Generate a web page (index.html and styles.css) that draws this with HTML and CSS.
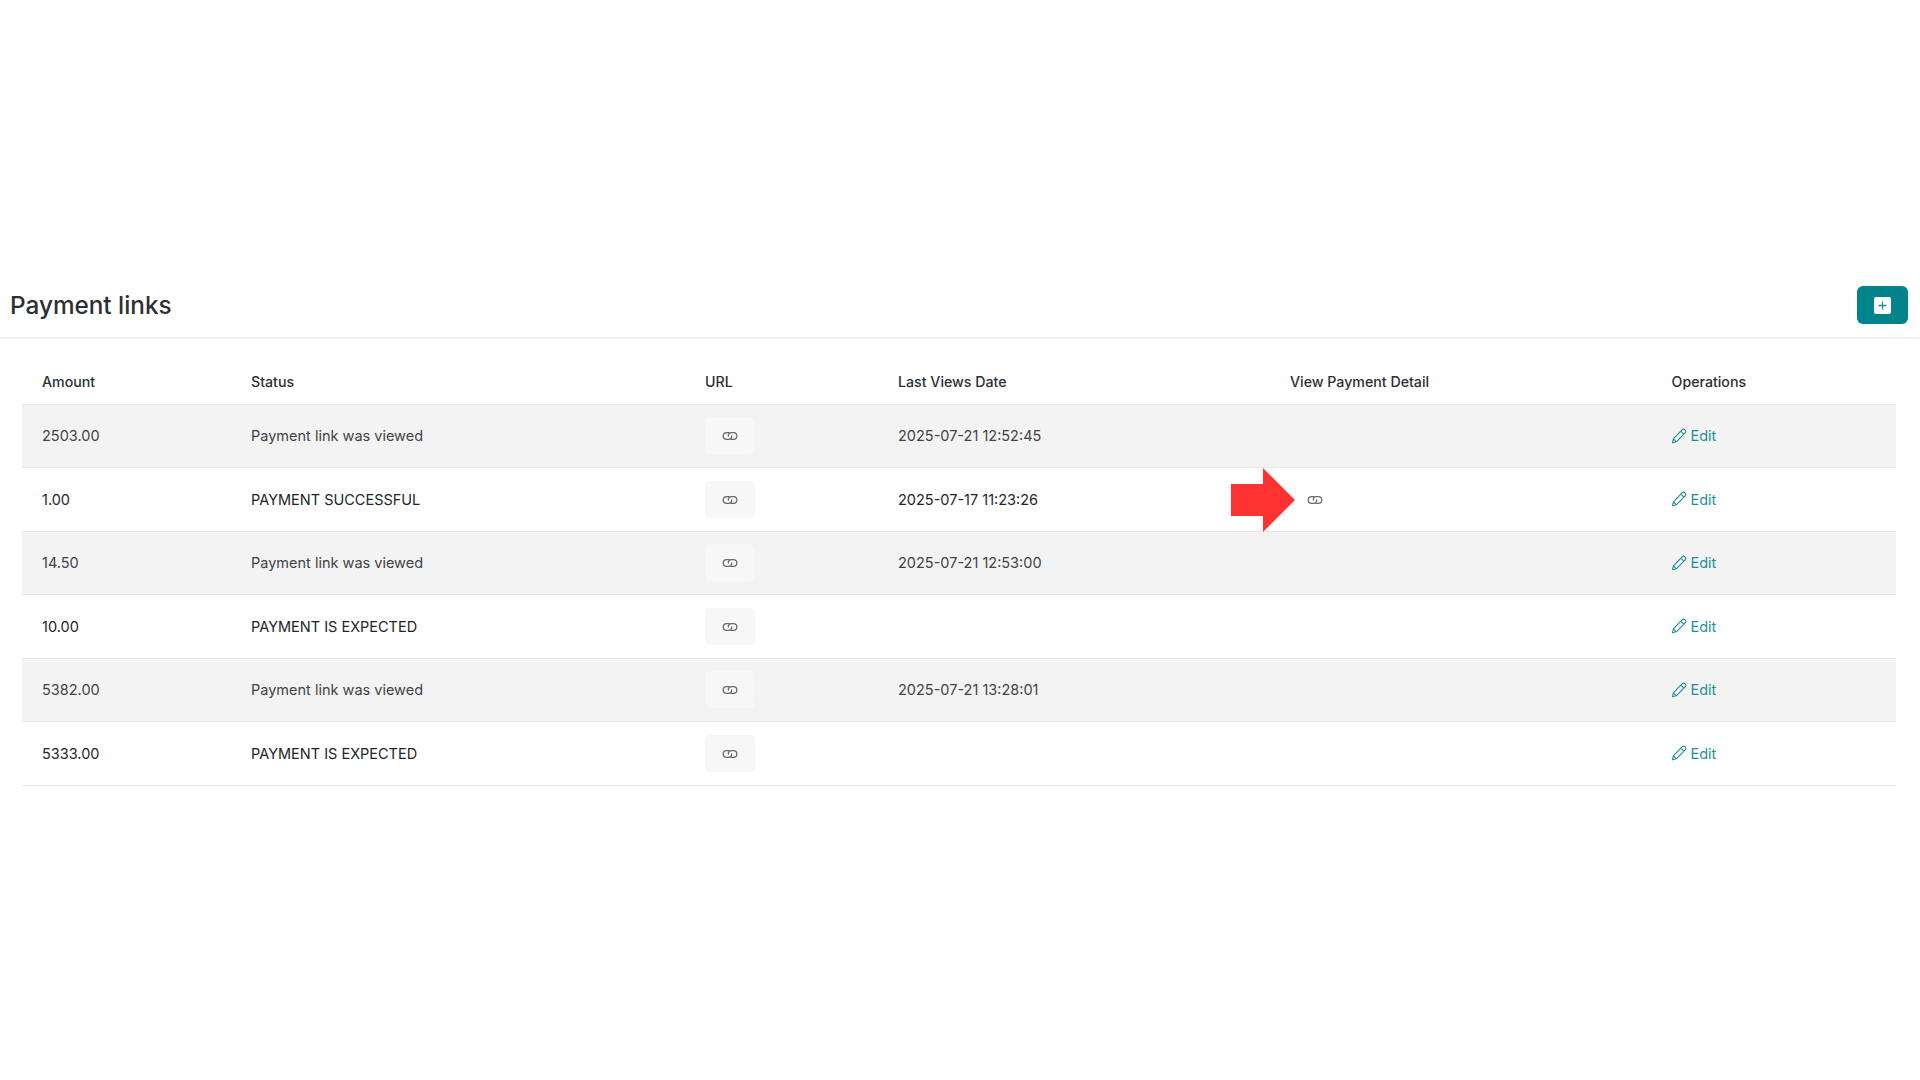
FILE: index.html
```html
<!DOCTYPE html>
<html lang="en">
<head>
<meta charset="utf-8">
<title>Payment links</title>
<link rel="stylesheet" href="styles.css">
</head>
<body>
<svg class="defs" width="0" height="0" aria-hidden="true">
  <symbol id="link" viewBox="0 0 16 16">
    <path d="M7 4.6H4.6a3.4 3.4 0 0 0 0 6.8H6.4a3.4 3.4 0 0 0 3.3-3.4" fill="none" stroke="currentColor" stroke-width="1.3" stroke-linecap="round"/>
    <path d="M9 11.4h2.4a3.4 3.4 0 0 0 0-6.8H9.6a3.4 3.4 0 0 0-3.3 3.4" fill="none" stroke="currentColor" stroke-width="1.3" stroke-linecap="round"/>
  </symbol>
  <symbol id="pencil" viewBox="0 0 16 16">
    <path d="M11.3 1.6a1.6 1.6 0 0 1 2.3 0l.8.8a1.6 1.6 0 0 1 0 2.3L5.3 13.8l-3.9 1 1-3.9zM9.8 3.1l3.1 3.1M2.4 10.9l2.9 2.9" fill="none" stroke="currentColor" stroke-width="1.1" stroke-linejoin="round"/>
  </symbol>
</svg>
<main class="page">
  <header class="head">
    <h1 class="title">Payment links</h1>
    <button class="add" type="button" aria-label="Add">
      <span class="add-box">
        <svg width="9" height="9" viewBox="0 0 9 9"><path d="M4.5 0.5v8M0.5 4.5h8" stroke="#1f8f94" stroke-width="1.3"/></svg>
      </span>
    </button>
  </header>
  <div class="wrap">
    <table class="links">
      <colgroup>
        <col class="c1"><col class="c2"><col class="c3"><col class="c4"><col class="c5"><col class="c6">
      </colgroup>
      <thead>
        <tr><th>Amount</th><th>Status</th><th>URL</th><th>Last Views Date</th><th>View Payment Detail</th><th>Operations</th></tr>
      </thead>
      <tbody>
        <tr>
          <td>2503.00</td><td>Payment link was viewed</td>
          <td><a class="url"><svg class="ic"><use href="#link"/></svg></a></td>
          <td>2025-07-21 12:52:45</td><td></td>
          <td><a class="edit"><svg class="pen"><use href="#pencil"/></svg>Edit</a></td>
        </tr>
        <tr>
          <td>1.00</td><td>PAYMENT SUCCESSFUL</td>
          <td><a class="url"><svg class="ic"><use href="#link"/></svg></a></td>
          <td>2025-07-17 11:23:26</td>
          <td class="detail">
            <svg class="arrow" width="64" height="64" viewBox="0 0 64 64"><path d="M0 16H32V0L64 32 32 64V48H0z" fill="#ff3232"/></svg>
            <a class="url plain"><svg class="ic"><use href="#link"/></svg></a>
          </td>
          <td><a class="edit"><svg class="pen"><use href="#pencil"/></svg>Edit</a></td>
        </tr>
        <tr>
          <td>14.50</td><td>Payment link was viewed</td>
          <td><a class="url"><svg class="ic"><use href="#link"/></svg></a></td>
          <td>2025-07-21 12:53:00</td><td></td>
          <td><a class="edit"><svg class="pen"><use href="#pencil"/></svg>Edit</a></td>
        </tr>
        <tr>
          <td>10.00</td><td>PAYMENT IS EXPECTED</td>
          <td><a class="url"><svg class="ic"><use href="#link"/></svg></a></td>
          <td></td><td></td>
          <td><a class="edit"><svg class="pen"><use href="#pencil"/></svg>Edit</a></td>
        </tr>
        <tr>
          <td>5382.00</td><td>Payment link was viewed</td>
          <td><a class="url"><svg class="ic"><use href="#link"/></svg></a></td>
          <td>2025-07-21 13:28:01</td><td></td>
          <td><a class="edit"><svg class="pen"><use href="#pencil"/></svg>Edit</a></td>
        </tr>
        <tr>
          <td>5333.00</td><td>PAYMENT IS EXPECTED</td>
          <td><a class="url"><svg class="ic"><use href="#link"/></svg></a></td>
          <td></td><td></td>
          <td><a class="edit"><svg class="pen"><use href="#pencil"/></svg>Edit</a></td>
        </tr>
      </tbody>
    </table>
  </div>
</main>
</body>
</html>
```
FILE: styles.css
```css
* { box-sizing: border-box; }
html, body { margin: 0; height: 100%; background: #fff; }
body { font-family: Inter, "Liberation Sans", sans-serif; color: #212529; overflow: hidden; }
.defs { display: block; height: 0; }
.page { padding-top: 287px; }

.head {
  display: flex;
  align-items: center;
  justify-content: space-between;
  height: 52px;
  padding: 0 12px 14px 10px;
  border-bottom: 2px solid #f3f3f3;
}
.title { margin: 0; font-size: 24.3px; line-height: 38px; font-weight: 500; color: #2b3035; }
.add {
  display: flex;
  align-items: center;
  justify-content: center;
  width: 51px;
  height: 38px;
  padding: 0;
  border: 0;
  border-radius: 6px;
  background: #00838a;
}
.add-box {
  display: flex;
  align-items: center;
  justify-content: center;
  width: 17px;
  height: 17px;
  border-radius: 2px;
  background: #fff;
}

.wrap { padding: 24px 24px 0 22px; }
.links { width: 100%; border-collapse: collapse; table-layout: fixed; font-size: 14.5px; }
.c1 { width: 209px; }
.c2 { width: 454px; }
.c3 { width: 193px; }
.c4 { width: 392px; }
.c5 { width: 381.5px; }

th {
  height: 41px;
  padding: 0 20px 4px;
  text-align: left;
  font-size: 14.2px;
  font-weight: 500;
  color: #2b3035;
  vertical-align: middle;
}
thead tr { border-bottom: 1px solid #e6e6e6; }
td {
  height: 63.5px;
  padding: 0 20px;
  vertical-align: middle;
  color: #212529;
  white-space: nowrap;
}
tbody tr { border-bottom: 1px solid #e8e8e8; }
tbody tr:nth-child(odd) { background: #f3f3f3; }
tbody tr:nth-child(odd) td { color: #3f4347; }

.url {
  display: flex;
  align-items: center;
  justify-content: center;
  width: 50px;
  height: 37px;
  border-radius: 5px;
  background: #f7f7f7;
  color: #6a6a6a;
}
.url.plain { background: transparent; }
.ic { width: 16px; height: 16px; margin-top: 1px; }

.detail { position: relative; }
.arrow { position: absolute; left: -39px; top: 0; }

.edit { display: flex; align-items: center; gap: 4px; color: #1f8f94; }
.pen { width: 16px; height: 16px; margin-left: -1px; }
```
